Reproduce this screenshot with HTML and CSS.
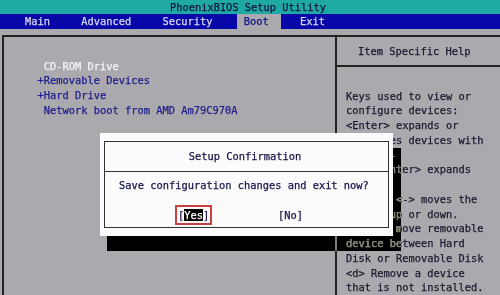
FILE: index.html
```html
<!DOCTYPE html>
<html lang="en">
  <head>
    <meta charset="UTF-8" />
    <meta name="viewport" content="width=device-width, initial-scale=1.0" />
    <title>PhoenixBIOS Setup Utility</title>
    <link rel="stylesheet" href="styles.css">
  </head>
  <body>
    <div class="screen">
      <header class="titlebar">PhoenixBIOS Setup Utility</header>

      <nav class="menubar">
        <span class="tab">Main</span>
        <span class="tab">Advanced</span>
        <span class="tab">Security</span>
        <span class="tab active">Boot</span>
        <span class="tab">Exit</span>
      </nav>

      <main class="panel">
        <section class="items">
          <div class="item current"> CD-ROM Drive</div>
          <div class="item">+Removable Devices</div>
          <div class="item">+Hard Drive</div>
          <div class="item"> Network boot from AMD Am79C970A</div>
        </section>

        <aside class="help">
          <div class="help-title">Item Specific Help</div>
          <div class="help-text">Keys used to view or
configure devices:
&lt;Enter&gt; expands or
collapses devices with
a + or -
&lt;Ctrl+Enter&gt; expands
all
&lt;+&gt; and &lt;-&gt; moves the
device up or down.
&lt;n&gt; May move removable
device between Hard
Disk or Removable Disk
&lt;d&gt; Remove a device
that is not installed.</div>
        </aside>
      </main>

      <!-- shadow under the popup: darkens what is behind it -->
      <div class="shadow"></div>

      <div class="dialog">
        <div class="dialog-frame">
          <div class="dialog-title">Setup Confirmation</div>
          <div class="dialog-body">
            <p class="question">Save configuration changes and exit now?</p>
            <div class="choices">
              <span class="choice picked">[<span class="hl">Yes</span>]</span>
              <span class="choice">[No]</span>
            </div>
          </div>
        </div>
      </div>
    </div>
  </body>
</html>
```

FILE: styles.css
```css
body {
  margin: 0;
  padding: 0;
  background-color: #aaa9ad;
  font-family: "DejaVu Sans Mono", "Liberation Mono", monospace;
  font-size: 10.38px;
  line-height: 14.75px;
  -webkit-text-stroke: 0.25px currentColor;
}

.screen {
  position: relative;
  width: 500px;
  height: 295px;
  overflow: hidden;
  display: flex;
  flex-direction: column;
}

.titlebar {
  height: 14px;
  line-height: 14px;
  background: #1ea9a4;
  color: #141440;
  text-align: center;
  padding-right: 4px;
}

.menubar {
  height: 15px;
  line-height: 15px;
  background: #0808a8;
  display: flex;
  gap: 18.75px;
  padding-left: 18.75px;
}

.tab {
  padding: 0 6.25px;
  color: #d8d8f4;
}

.tab.active {
  background: #aaa9ad;
  color: #10108a;
  padding-right: 12.5px;
  margin-right: -6.25px;
}

.panel {
  flex: 1;
  margin: 6px 0 0 2px;
  border-top: 2px solid #222;
  border-left: 2px solid #222;
  display: grid;
  grid-template-columns: 333px 1fr;
}

.items {
  border-right: 2px solid #222;
  padding: 21.6px 0 0 33.5px;
}

.item {
  white-space: pre;
  color: #20208c;
}

.item.current {
  color: #f4f4f8;
}

.help-title {
  height: 28px;
  line-height: 28px;
  border-bottom: 2px solid #222;
  padding-left: 21px;
  color: #1a1a30;
}

.help-text {
  white-space: pre;
  padding: 21.6px 0 0 9px;
  color: #1a1a30;
}

.shadow {
  position: absolute;
  left: 107px;
  top: 148px;
  width: 294px;
  height: 103px;
  background: rgba(0, 0, 0, 0.01);
  backdrop-filter: invert(1) contrast(3) brightness(0.5);
}

.dialog {
  position: absolute;
  left: 100px;
  top: 133px;
  width: 293px;
  height: 103px;
  background: #fbfbfb;
  padding: 8px 4px;
  box-sizing: border-box;
}

.dialog-frame {
  height: 100%;
  border: 1px solid #333;
  box-sizing: border-box;
  color: #16164a;
}

.dialog-title {
  height: 29px;
  line-height: 29px;
  border-bottom: 1px solid #333;
  text-align: center;
  padding-right: 3px;
}

.dialog-body {
  padding-top: 5.6px;
  display: flex;
  flex-direction: column;
  gap: 15.25px;
}

.question {
  margin: 0;
  padding-left: 14px;
}

.choices {
  display: flex;
  gap: 68.75px;
  padding-left: 73px;
}

.choice.picked {
  outline: 2px solid #c8403f;
  outline-offset: 1px;
}

.hl {
  background: #000;
  color: #fff;
}
```
